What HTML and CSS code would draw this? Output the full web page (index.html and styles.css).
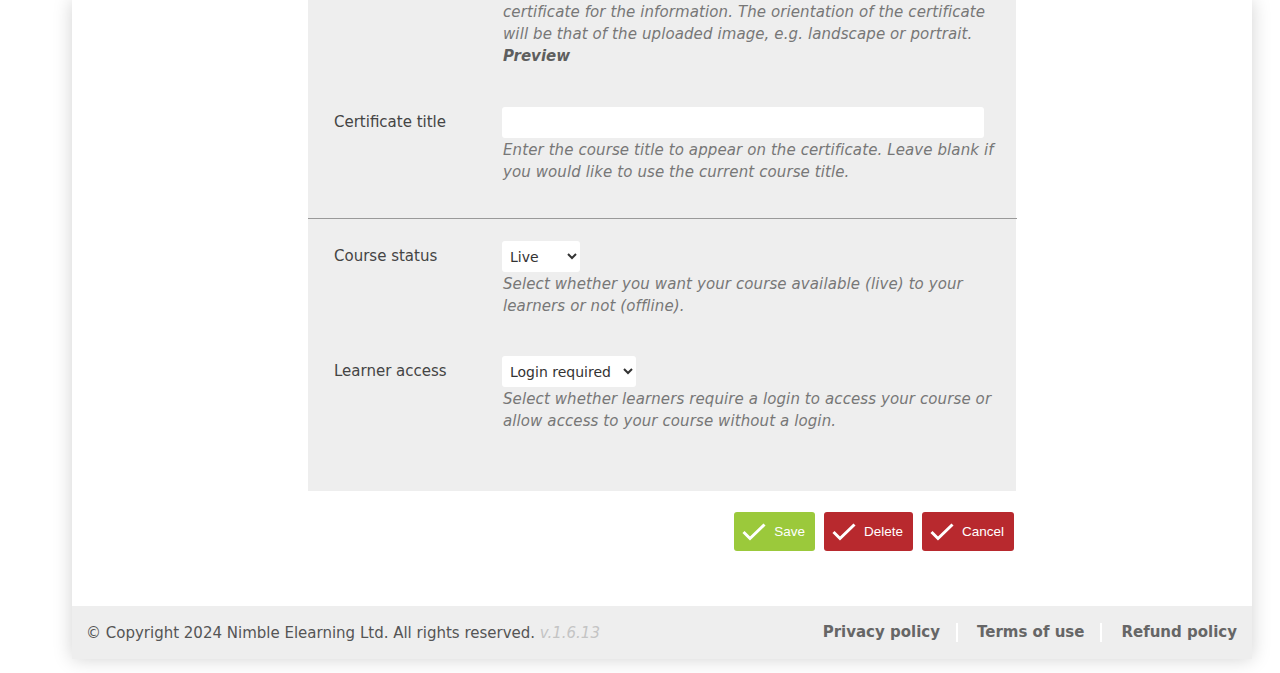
FILE: index.html
```html
<!DOCTYPE html>
<html>
<head>
<meta charset="utf-8">
<link rel="stylesheet" href="styles.css">
</head>
<body>
<div class="page">
  <div class="content">
    <div class="panel">
      <div class="row row-first">
        <div class="label"></div>
        <div class="field">
          <p class="help">certificate for the information. The orientation of the certificate will be that of the uploaded image, e.g. landscape or portrait.<br><b>Preview</b></p>
        </div>
      </div>
      <div class="row">
        <div class="label">Certificate title</div>
        <div class="field">
          <input class="text" type="text">
          <p class="help help-after">Enter the course title to appear on the certificate. Leave blank if you would like to use the current course title.</p>
        </div>
      </div>
      <hr class="sep">
      <div class="row">
        <div class="label">Course status</div>
        <div class="field">
          <select class="sel sel-live"><option>Live</option><option>Offline</option></select>
          <p class="help help-after">Select whether you want your course available (live) to your learners or not (offline).</p>
        </div>
      </div>
      <div class="row">
        <div class="label">Learner access</div>
        <div class="field">
          <select class="sel sel-access"><option>Login required</option><option>No login</option></select>
          <p class="help help-after">Select whether learners require a login to access your course or allow access to your course without a login.</p>
        </div>
      </div>
    </div>
    <div class="buttons">
      <button class="btn btn-save"><svg class="chk" width="24" height="18" viewBox="0 0 24 18"><polyline points="1.5,9 8,15.5 22.5,1.5" fill="none" stroke="#fff" stroke-width="3"/></svg>Save</button>
      <button class="btn btn-red"><svg class="chk" width="24" height="18" viewBox="0 0 24 18"><polyline points="1.5,9 8,15.5 22.5,1.5" fill="none" stroke="#fff" stroke-width="3"/></svg>Delete</button>
      <button class="btn btn-red"><svg class="chk" width="24" height="18" viewBox="0 0 24 18"><polyline points="1.5,9 8,15.5 22.5,1.5" fill="none" stroke="#fff" stroke-width="3"/></svg>Cancel</button>
    </div>
  </div>
  <footer class="footer">
    <div class="copy">© Copyright 2024 Nimble Elearning Ltd. All rights reserved. <span class="ver">v.1.6.13</span></div>
    <nav class="links">
      <a class="link">Privacy policy</a>
      <a class="link">Terms of use</a>
      <a class="link">Refund policy</a>
    </nav>
  </footer>
</div>
</body>
</html>
```
FILE: styles.css
```css
html, body {
  margin: 0;
  padding: 0;
  background: #fff;
}
body {
  font-family: "DejaVu Sans", Verdana, sans-serif;
  font-size: 15px;
  color: #444;
  overflow: hidden;
  height: 673px;
}
.page {
  width: 1180px;
  margin: 0 auto 0 72px;
  background: #fff;
  box-shadow: 0 0 18px rgba(0,0,0,0.18);
}
.content {
  padding: 0 236px 55px 236px;
}
.panel {
  background: #eeeeee;
  padding: 0 0 59px 0;
}
.row {
  display: flex;
  padding: 0 16px 0 26px;
}
.row + .row {
  margin-top: 39px;
}
.row-first {
  padding-top: 1px;
}
.row-first + .row {
  margin-top: 40px;
}
.label {
  width: 168px;
  flex: none;
  padding-top: 7px;
  line-height: 17px;
}
.field {
  flex: 1;
}
.help {
  margin: 0;
  font-style: italic;
  color: #777;
  line-height: 22px;
  padding-left: 1px;
  letter-spacing: 0.1px;
}
.help-after {
  margin-top: 1px;
}
.help b {
  color: #5e5e5e;
  letter-spacing: 0;
}
.text {
  display: block;
  width: 482px;
  height: 31px;
  box-sizing: border-box;
  border: none;
  border-radius: 3px;
  background: #fff;
  margin: 0;
}
.sel {
  display: block;
  height: 31px;
  border: none;
  border-radius: 3px;
  background: #fff;
  font-family: inherit;
  font-size: 14px;
  color: #333;
  padding: 0 3px 0 4px;
  margin: 0;
}
.sel-live { width: 78px; }
.sel-access { width: 134px; }
.sep {
  margin: 35px 0 22px 0;
  border: none;
  border-top: 1px solid #999;
  width: 709px;
}
.buttons {
  display: flex;
  justify-content: flex-end;
  gap: 9px;
  padding: 21px 2px 0 0;
}
.btn {
  display: flex;
  align-items: center;
  height: 39px;
  border: none;
  border-radius: 3px;
  color: #fff;
  font-family: "Liberation Sans", Arial, sans-serif;
  font-size: 13.5px;
  padding: 0 10px 0 8px;
  gap: 8px;
}
.chk { flex: none; }
.btn-save { background: #9bc93b; }
.btn-red { background: #b8292e; }
.footer {
  display: flex;
  justify-content: space-between;
  align-items: center;
  height: 53px;
  background: #eeeeee;
  padding: 0 15px 0 14px;
  margin-bottom: 14px;
}
.copy {
  color: #555;
}
.ver {
  font-style: italic;
  color: #c4c4c4;
}
.links {
  display: flex;
}
.link {
  font-weight: bold;
  color: #666;
  padding: 0 16px 0 19px;
  border-left: 2px solid #fff;
  line-height: 19px;
}
.link:first-child { border-left: none; }
.link:last-child { padding-right: 0; }
```
